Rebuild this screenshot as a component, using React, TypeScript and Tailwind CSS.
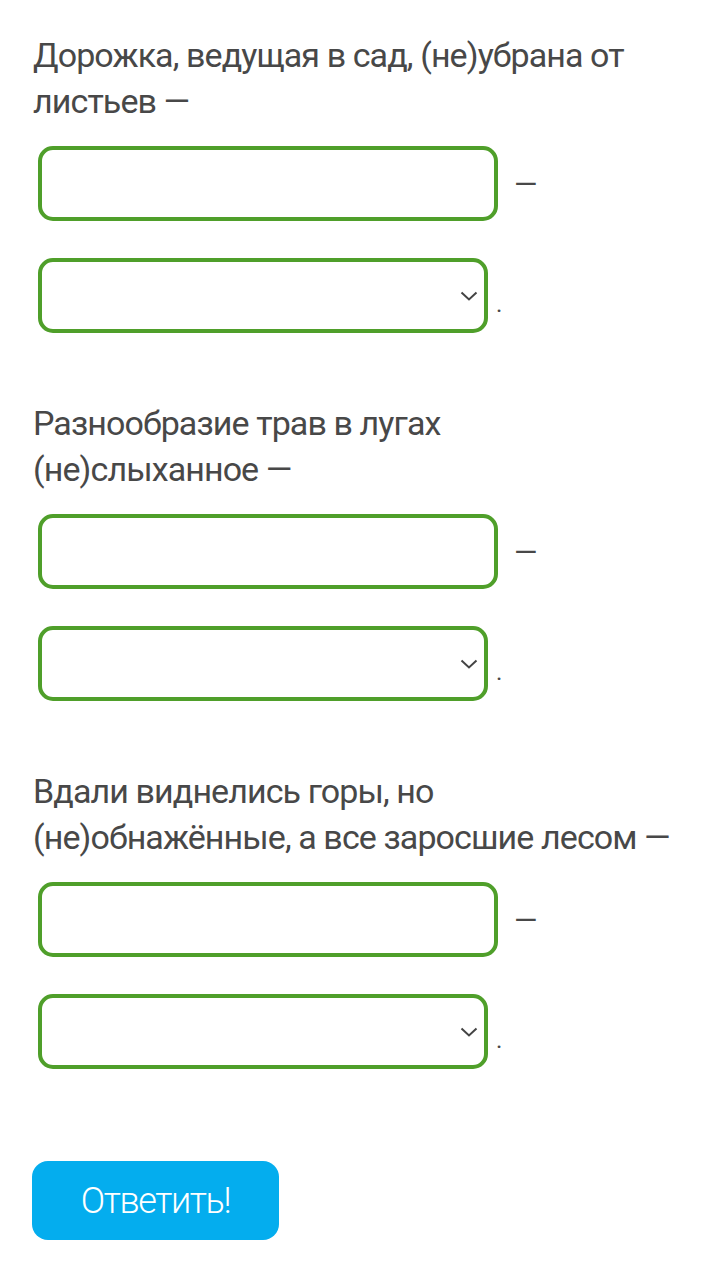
import { FC } from "react";

const questions = [
  "Дорожка, ведущая в сад, (не)убрана от листьев —",
  "Разнообразие трав в лугах (не)слыханное —",
  "Вдали виднелись горы, но (не)обнажённые, а все заросшие лесом —",
];

const Chevron: FC = () => (
  <svg
    width="18"
    height="10"
    viewBox="0 0 18 10"
    className="pointer-events-none absolute right-[10px] top-[33px]"
  >
    <path d="M1.5 1.5 L9 8.5 L16.5 1.5" fill="none" stroke="#444" strokeWidth="2" />
  </svg>
);

const Question: FC<{ text: string }> = ({ text }) => (
  <div className="flex flex-col">
    <p className="w-[638px] text-[34px] leading-[46px] tracking-[-0.9px] text-[#484848]">
      {text}
    </p>
    <div className="mt-[22px] ml-[5px] flex items-center">
      <input
        type="text"
        className="h-[75px] w-[460px] rounded-[15px] border-[4.5px] border-[#4f9f2a] bg-white px-4 text-[28px] outline-none"
      />
      <span className="ml-[16px] text-[30px] leading-none text-[#484848]">—</span>
    </div>
    <div className="mt-[37px] ml-[5px] flex items-end">
      <div className="relative">
        <select className="h-[75px] w-[450px] appearance-none rounded-[15px] border-[4.5px] border-[#4f9f2a] bg-white px-4 text-[28px] outline-none">
          <option value=""></option>
        </select>
        <Chevron />
      </div>
      <span className="mb-[17px] ml-[8px] text-[24px] leading-none text-[#484848]">.</span>
    </div>
  </div>
);

const App: FC = () => {
  return (
    <div className="min-h-[1285px] w-[720px] bg-white pl-[33px] pt-[32px] font-['Roboto',sans-serif]">
      <div className="flex flex-col gap-[67px]">
        {questions.map((q) => (
          <Question key={q} text={q} />
        ))}
      </div>
      <button className="mt-[92px] -ml-[1px] h-[79px] w-[247px] rounded-[16px] bg-[#04adee] text-[36px] font-light tracking-[-1.4px] text-white">
        Ответить!
      </button>
    </div>
  );
};

export default App;
